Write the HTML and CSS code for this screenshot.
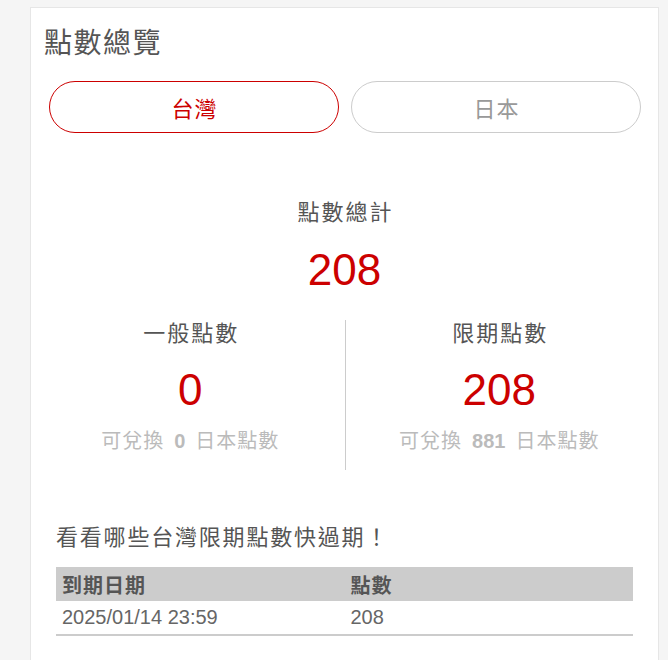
FILE: index.html
```html
<!DOCTYPE html>
<html lang="zh-Hant">
<head>
<meta charset="utf-8">
<title>點數總覽</title>
<link rel="stylesheet" href="styles.css">
</head>
<body>
<div class="card">
  <h1 class="title">點數總覽</h1>
  <div class="tabs">
    <button class="tab tab-active">台灣</button>
    <button class="tab">日本</button>
  </div>
  <div class="summary">
    <div class="total-label">點數總計</div>
    <div class="big-num total-num">208</div>
    <div class="cols">
      <div class="col">
        <div class="col-label">一般點數</div>
        <div class="big-num">0</div>
        <div class="sub">可兌換<span class="sub-num">0</span>日本點數</div>
      </div>
      <div class="col col-right">
        <div class="col-label">限期點數</div>
        <div class="big-num">208</div>
        <div class="sub">可兌換<span class="sub-num">881</span>日本點數</div>
      </div>
    </div>
  </div>
  <div class="expire">
    <h2 class="expire-title">看看哪些台灣限期點數快過期！</h2>
    <table class="exp-table">
      <thead>
        <tr><th>到期日期</th><th>點數</th></tr>
      </thead>
      <tbody>
        <tr><td>2025/01/14 23:59</td><td>208</td></tr>
      </tbody>
    </table>
  </div>
</div>
</body>
</html>
```

FILE: styles.css
```css
html, body {
  margin: 0;
  padding: 0;
}
body {
  background: #f5f5f5;
  font-family: "Liberation Sans", "Noto Sans CJK TC", sans-serif;
  color: #555;
}
.card {
  box-sizing: border-box;
  width: 629px;
  min-height: 720px;
  margin: 7px 0 0 30px;
  background: #fff;
  border: 1px solid #e6e6e6;
  padding-top: 18px;
}
.title {
  margin: 0 0 19px 13px;
  font-size: 28px;
  line-height: 36px;
  font-weight: normal;
  letter-spacing: 1.5px;
  color: #555;
}
.tabs {
  display: flex;
  gap: 12px;
  padding: 0 17px 0 18px;
}
.tab {
  box-sizing: border-box;
  width: 290px;
  height: 52px;
  border: 1px solid #ccc;
  border-radius: 26px;
  background: #fff;
  font-family: inherit;
  font-size: 22px;
  letter-spacing: 1px;
  color: #999;
  display: flex;
  align-items: center;
  justify-content: center;
  padding: 0 0 0 1px;
}
.tab-active {
  border-color: #c00;
  color: #c00;
}
.summary {
  padding: 0 5px;
  text-align: center;
}
.total-label {
  margin-top: 65px;
  font-size: 22px;
  line-height: 30px;
  letter-spacing: 2px;
  padding-left: 2px;
  color: #555;
}
.big-num {
  margin-top: 17px;
  font-size: 44px;
  line-height: 50px;
  color: #c00;
}
.cols {
  display: grid;
  grid-template-columns: 1fr 1fr;
  margin-top: 25px;
}
.col {
  padding-bottom: 16px;
}
.col-right {
  border-left: 1px solid #ccc;
}
.col-label {
  font-size: 22px;
  line-height: 28px;
  letter-spacing: 2px;
  padding-left: 2px;
  color: #555;
}
.sub {
  margin-top: 13px;
  font-size: 20px;
  line-height: 26px;
  letter-spacing: 1px;
  color: #bbb;
}
.sub-num {
  margin: 0 10px;
  font-weight: bold;
  letter-spacing: 0;
}
.expire {
  padding: 0 25px;
  margin-top: 53px;
}
.expire-title {
  margin: 0 0 14px;
  font-size: 22px;
  line-height: 30px;
  font-weight: normal;
  letter-spacing: 1.8px;
  color: #555;
}
.exp-table {
  width: 100%;
  border-collapse: collapse;
  table-layout: fixed;
  border-bottom: 2px solid #ccc;
}
.exp-table th {
  background: #ccc;
  height: 34px;
  padding: 0 6px;
  text-align: left;
  font-size: 20px;
  font-weight: bold;
  letter-spacing: 1px;
  color: #555;
}
.exp-table td {
  height: 33px;
  padding: 0 6px;
  font-size: 20px;
  color: #666;
}
```
